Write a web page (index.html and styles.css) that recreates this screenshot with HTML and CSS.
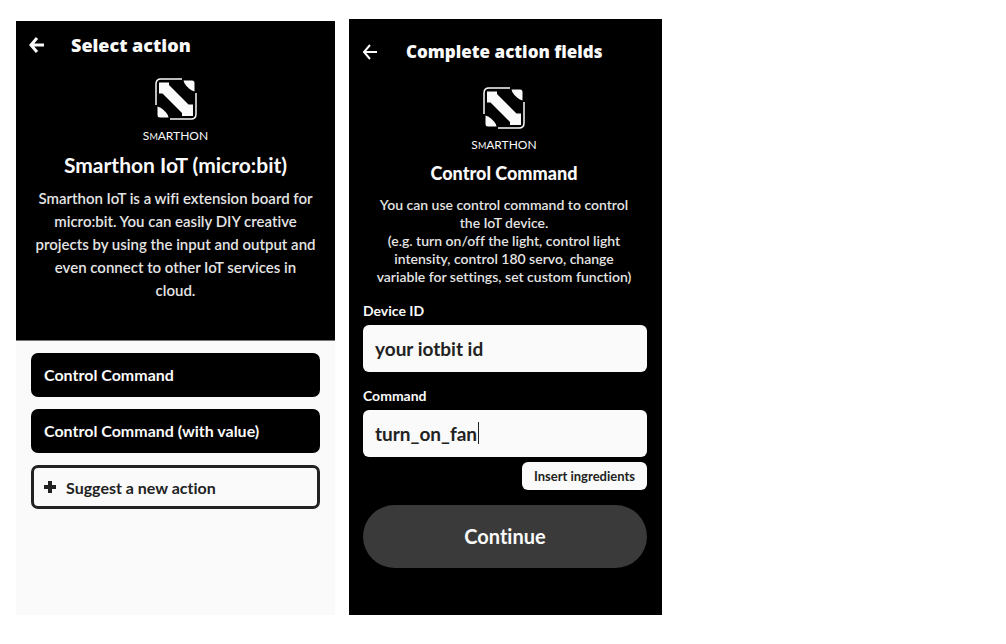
FILE: index.html
```html
<!DOCTYPE html>
<html lang="en">
<head>
<meta charset="utf-8">
<title>Smarthon IoT actions</title>
<link rel="stylesheet" href="styles.css">
</head>
<body>
<svg class="symbols" width="0" height="0" aria-hidden="true">
  <symbol id="logo" viewBox="0 0 42 42">
    <path d="M1 27V6Q1 1 6 1H27" fill="none" stroke="#fafafa" stroke-width="1.5"/>
    <path d="M41 15V36Q41 41 36 41H15" fill="none" stroke="#fafafa" stroke-width="1.5"/>
    <path d="M4 4.500H14V7L33.500 26.500H38V38H27V35L7.500 15.500H4Z" fill="#fafafa"/>
    <path d="M28.500 2.500H37Q39.500 2.500 39.500 5V13.500Q36 12.500 34 10.500L31 7.500Q29 5.500 28.500 2.500Z" fill="#fafafa"/>
    <path d="M2.500 28.500Q6 29.500 8 31.500L11 34.500Q13 36.500 13.500 39.500H5Q2.500 39.500 2.500 37Z" fill="#fafafa"/>
  </symbol>
  <symbol id="back" viewBox="0 0 16 16">
    <path d="M15 8H2M8 1L2 8L8 15" fill="none" stroke="#fafafa"/>
  </symbol>
</svg>
<main class="screens">
  <section class="screen screen-select">
    <div class="intro">
      <header class="bar">
        <button class="back back-bold" type="button" aria-label="Back"><svg viewBox="0 0 16 16"><use href="#back"/></svg></button>
        <h1 class="bar-title">Select action</h1>
      </header>
      <div class="brand">
        <svg class="brand-mark" aria-hidden="true"><use href="#logo"/></svg>
        <span class="brand-name">S<span class="brand-small">M</span>ARTHON</span>
      </div>
      <h2 class="service">Smarthon IoT (micro:bit)</h2>
      <p class="about">Smarthon IoT is a wifi extension board for<br>micro:bit. You can easily DIY creative<br>projects by using the input and output and<br>even connect to other IoT services in<br>cloud.</p>
    </div>
    <div class="actions">
      <button class="action" type="button">Control Command</button>
      <button class="action" type="button">Control Command (with value)</button>
      <button class="action action-outline" type="button"><svg class="plus" viewBox="0 0 12 12" aria-hidden="true"><path d="M6 0V12M0 6H12" stroke="#222" stroke-width="4"/></svg>Suggest a new action</button>
    </div>
  </section>
  <section class="screen screen-fields">
    <header class="bar">
      <button class="back" type="button" aria-label="Back"><svg viewBox="0 0 16 16"><use href="#back"/></svg></button>
      <h1 class="bar-title">Complete action fields</h1>
    </header>
    <div class="brand">
      <svg class="brand-mark" aria-hidden="true"><use href="#logo"/></svg>
      <span class="brand-name">S<span class="brand-small">M</span>ARTHON</span>
    </div>
    <h2 class="command">Control Command</h2>
    <p class="details">You can use control command to control<br>the IoT device.<br>(e.g. turn on/off the light, control light<br>intensity, control 180 servo, change<br>variable for settings, set custom function)</p>
    <form class="form">
      <label class="label" for="device">Device ID</label>
      <input class="input" id="device" type="text" value="your iotbit id">
      <label class="label" for="command">Command</label>
      <div class="field">
        <input class="input" id="command" type="text" value="turn_on_fan">
        <span class="caret"></span>
      </div>
      <button class="insert" type="button">Insert ingredients</button>
      <button class="continue" type="button">Continue</button>
    </form>
  </section>
</main>
</body>
</html>
```
FILE: styles.css
```css
* { box-sizing: border-box; }
body {
  margin: 0;
  background: #fff;
  font-family: Lato, "Open Sans", sans-serif;
  font-weight: 700;
  font-variant-ligatures: none;
  color: #fafafa;
}
h1, h2, p { margin: 0; }
button, input { font: inherit; font-variant-ligatures: none; border: 0; }
button { cursor: pointer; }
.symbols { display: block; }

.screens {
  display: grid;
  grid-template-columns: 319fr 313fr 330fr;
  gap: 14px;
  align-items: start;
  padding: 19px 0 28px 16px;
}
.screen-select {
  margin-top: 2px;
  padding-bottom: 106px;
  background: #fafafa;
}
.intro {
  padding: 12px 12px 38px;
  background: #000;
  border-bottom: 1px solid #777;
}
.screen-fields {
  padding: 21px 15px 47px 12px;
  background: #000;
}

.bar { display: flex; align-items: center; height: 24px; }
.back {
  display: flex;
  width: 18px;
  height: 18px;
  padding: 1px;
  background: none;
  stroke-width: 2;
}
.back svg { width: 16px; height: 16px; }
.back-bold { stroke-width: 3; }
.bar-title { margin-left: 25px; font-family: "Open Sans", Lato, sans-serif; font-size: 18px; line-height: 24px; font-weight: 800; }
.screen-fields .bar-title { margin-left: 27px; font-size: 17px; }

.brand { display: flex; flex-direction: column; align-items: center; }
.intro .brand { margin-top: 21px; }
.screen-fields .brand { margin-top: 23px; }
.brand-mark { width: 42px; height: 42px; }
.brand-name { margin-top: 8px; font-size: 12px; line-height: 16px; font-weight: 400; }
.brand-small { font-size: 9px; }

.service { margin-top: 8px; font-size: 21px; line-height: 24px; text-align: center; }
.about { margin-top: 10px; font-size: 15px; line-height: 23px; font-weight: 600; text-align: center; white-space: nowrap; color: #e4e4e4; }
.command { margin-top: 7px; font-size: 18px; line-height: 24px; font-weight: 900; text-align: center; }
.details { margin-top: 11px; font-size: 14px; line-height: 18px; font-weight: 600; text-align: center; white-space: nowrap; color: #e4e4e4; }

.actions { display: flex; flex-direction: column; gap: 12px; padding: 12px 15px 0; }
.action {
  display: flex;
  align-items: center;
  height: 44px;
  padding: 0 13px 2px;
  border-radius: 7px;
  background: #000;
  color: #fafafa;
  font-size: 16px;
}
.action-outline { padding: 0 10px; border: 3px solid #222; background: #fafafa; color: #222; }
.plus { width: 12px; height: 12px; margin-right: 10px; }

.form { display: flex; flex-direction: column; margin-top: 13px; padding-left: 2px; }
.label { padding: 2px 0 4px; font-size: 14px; line-height: 20px; }
.field { position: relative; }
.input {
  width: 100%;
  height: 47px;
  padding: 0 12px;
  border-radius: 6px;
  background: #fafafa;
  color: #222;
  font-size: 19px;
}
#device { margin-bottom: 12px; }
.caret { position: absolute; left: 115px; top: 12px; width: 1px; height: 22px; background: #222; }
.insert {
  align-self: flex-end;
  height: 28px;
  margin-top: 5px;
  padding: 0 12px;
  border-radius: 6px;
  background: #fafafa;
  color: #222;
  font-size: 13px;
}
.continue {
  height: 63px;
  margin-top: 15px;
  padding-bottom: 2px;
  border-radius: 32px;
  background: #3a3a3a;
  color: #fafafa;
  font-size: 20px;
}
```
